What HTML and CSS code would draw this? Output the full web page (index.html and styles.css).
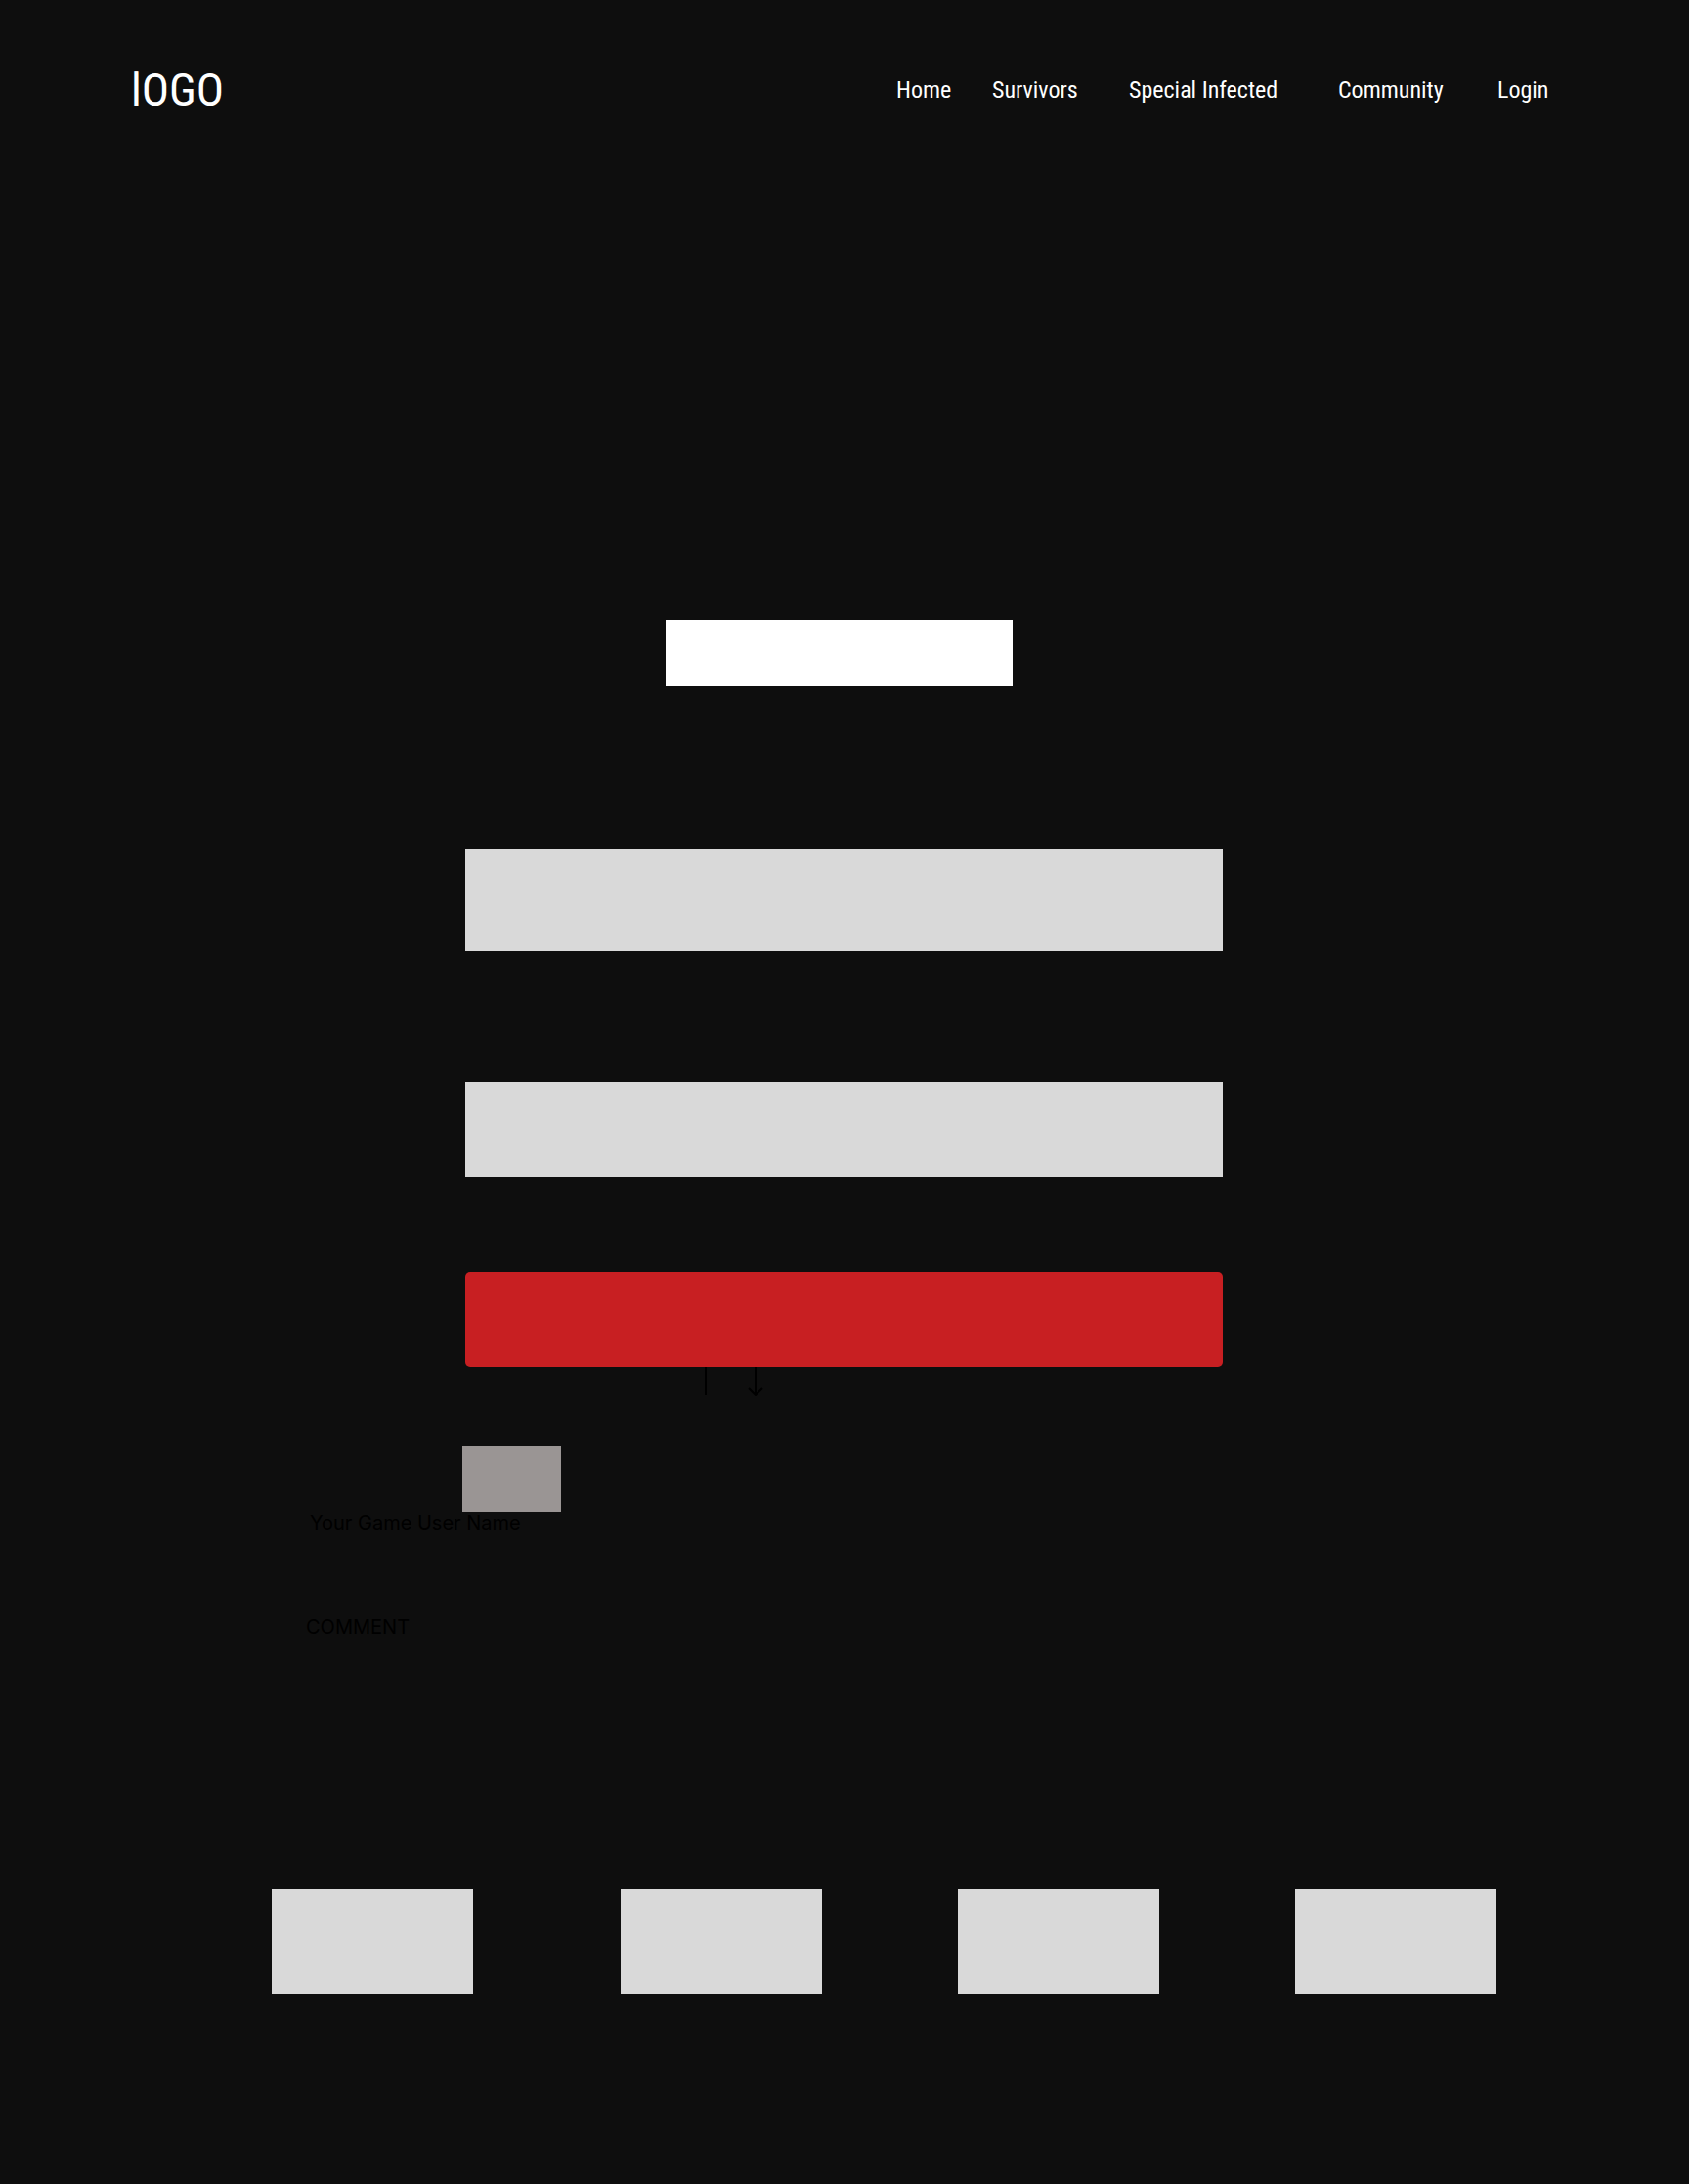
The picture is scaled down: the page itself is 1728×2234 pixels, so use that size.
FILE: index.html
```html
<!DOCTYPE html>
<html lang="en">
<head>
<meta charset="utf-8">
<title>L4D</title>
<link rel="stylesheet" href="styles.css">
</head>
<body>
<header class="site-header">
  <div class="logo">lOGO</div>
  <nav class="nav">
    <a class="nav-link nav-home" href="#">Home</a>
    <a class="nav-link nav-survivors" href="#">Survivors</a>
    <a class="nav-link nav-special" href="#">Special Infected</a>
    <a class="nav-link nav-community" href="#">Community</a>
    <a class="nav-link nav-login" href="#">Login</a>
  </nav>
</header>
<main class="content">
  <div class="hero-box"></div>
  <div class="field field-first"></div>
  <div class="field field-second"></div>
  <div class="submit"></div>
  <svg class="arrows" width="66" height="30" viewBox="0 0 66 30" aria-hidden="true">
    <line x1="6" y1="0" x2="6" y2="29" stroke="#000" stroke-width="2"/>
    <line x1="57" y1="0" x2="57" y2="29" stroke="#000" stroke-width="2"/>
    <polyline points="50,22 57,29 64,22" fill="none" stroke="#000" stroke-width="2"/>
  </svg>
</main>
<section class="comment-area">
  <div class="avatar"></div>
  <div class="label label-user">Your Game User Name</div>
  <div class="label label-comment">COMMENT</div>
</section>
<section class="tiles">
  <div class="tile tile-1"></div>
  <div class="tile tile-2"></div>
  <div class="tile tile-3"></div>
  <div class="tile tile-4"></div>
</section>
</body>
</html>
```

FILE: styles.css
```css
html, body {
  margin: 0;
  padding: 0;
  background: #0e0e0e;
}
body {
  min-height: 2234px;
  font-family: Roboto, "Liberation Sans", sans-serif;
}
.site-header {
  display: flex;
  align-items: flex-start;
  padding: 65px 0 0 134px;
}
.logo {
  width: 783px;
  flex: none;
  margin-top: 3px;
  font-family: Roboto, sans-serif;
  font-stretch: 75%;
  font-size: 47px;
  line-height: 47px;
  font-weight: 400;
  color: #fff;
}
.nav {
  display: flex;
  margin-top: 15px;
}
.nav-link {
  display: block;
  font-family: Roboto, sans-serif;
  font-stretch: 75%;
  font-size: 24px;
  line-height: 24px;
  color: #fff;
  text-decoration: none;
  flex: none;
}
.nav-home { width: 98px; }
.nav-survivors { width: 140px; }
.nav-special { width: 214px; }
.nav-community { width: 163px; }
.content {
  width: 775px;
  margin: 519px 0 0 476px;
}
.hero-box {
  width: 355px;
  height: 68px;
  margin-left: 205px;
  background: #fff;
}
.field {
  background: #d9d9d9;
}
.field-first {
  margin-top: 166px;
  height: 105px;
}
.field-second {
  margin-top: 134px;
  height: 97px;
}
.submit {
  margin-top: 97px;
  height: 97px;
  background: #c81f22;
  border-radius: 5px;
}
.arrows {
  display: block;
  margin-left: 240px;
}
.comment-area {
  margin-top: 51px;
}
.avatar {
  width: 101px;
  height: 68px;
  margin-left: 473px;
  background: #9a9594;
}
.label {
  font-family: Inter, "Noto Sans", sans-serif;
  color: #000;
  line-height: 1;
}
.label-user {
  margin-left: 317px;
  margin-top: 1px;
  font-size: 20px;
}
.label-comment {
  margin-left: 313px;
  margin-top: 86px;
  font-size: 20px;
}
.tiles {
  display: flex;
  margin-top: 258px;
  padding-left: 278px;
}
.tile {
  width: 206px;
  height: 108px;
  background: #d9d9d9;
  flex: none;
}
.tile-2 { margin-left: 151px; }
.tile-3 { margin-left: 139px; }
.tile-4 { margin-left: 139px; }
```
